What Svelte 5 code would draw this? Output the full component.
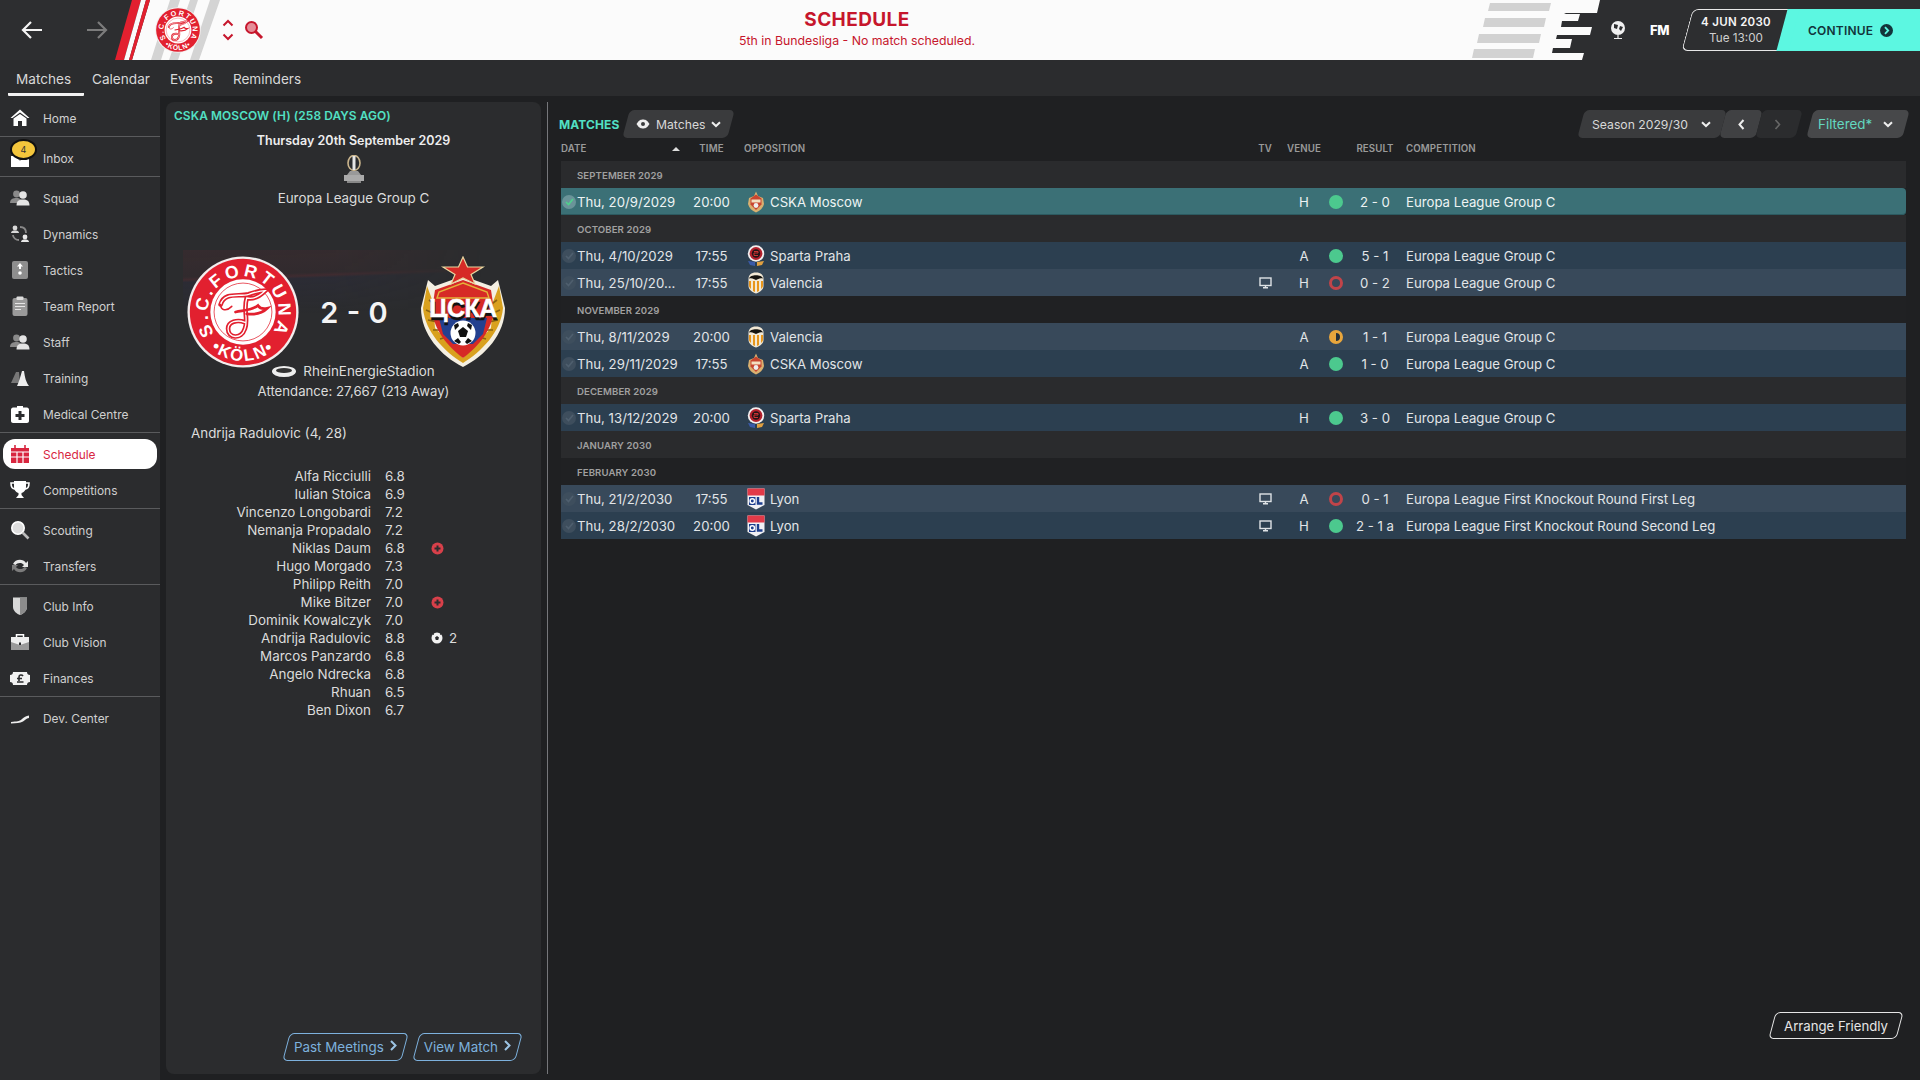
<script>
  const groups = [
    [{ n: 'Home', i: 'home' }],
    [{ n: 'Inbox', i: 'inbox', badge: 4 }],
    [{ n: 'Squad', i: 'people' }, { n: 'Dynamics', i: 'dyn' }, { n: 'Tactics', i: 'tactics' }, { n: 'Team Report', i: 'report' }, { n: 'Staff', i: 'people' }, { n: 'Training', i: 'training' }, { n: 'Medical Centre', i: 'medical' }],
    [{ n: 'Schedule', i: 'cal', active: true }, { n: 'Competitions', i: 'trophy' }],
    [{ n: 'Scouting', i: 'search' }, { n: 'Transfers', i: 'transfer' }],
    [{ n: 'Club Info', i: 'shield' }, { n: 'Club Vision', i: 'case' }, { n: 'Finances', i: 'money' }],
    [{ n: 'Dev. Center', i: 'dev' }]
  ];
  const players = [
    ['Alfa Ricciulli', '6.8'], ['Iulian Stoica', '6.9'], ['Vincenzo Longobardi', '7.2'], ['Nemanja Propadalo', '7.2'],
    ['Niklas Daum', '6.8', 'inj'], ['Hugo Morgado', '7.3'], ['Philipp Reith', '7.0'], ['Mike Bitzer', '7.0', 'inj'],
    ['Dominik Kowalczyk', '7.0'], ['Andrija Radulovic', '8.8', 'goal'], ['Marcos Panzardo', '6.8'], ['Angelo Ndrecka', '6.8'],
    ['Rhuan', '6.5'], ['Ben Dixon', '6.7']
  ];
  const EL = 'Europa League Group C';
  const rows = [
    { h: 'SEPTEMBER 2029' },
    { d: 'Thu, 20/9/2029', t: '20:00', b: 'cska', o: 'CSKA Moscow', v: 'H', r: 'w', s: '2 - 0', c: EL, sel: true },
    { h: 'OCTOBER 2029' },
    { d: 'Thu, 4/10/2029', t: '17:55', b: 'sparta', o: 'Sparta Praha', v: 'A', r: 'w', s: '5 - 1', c: EL },
    { d: 'Thu, 25/10/20...', t: '17:55', b: 'val', o: 'Valencia', tv: true, v: 'H', r: 'l', s: '0 - 2', c: EL },
    { h: 'NOVEMBER 2029' },
    { d: 'Thu, 8/11/2029', t: '20:00', b: 'val', o: 'Valencia', v: 'A', r: 'd', s: '1 - 1', c: EL },
    { d: 'Thu, 29/11/2029', t: '17:55', b: 'cska', o: 'CSKA Moscow', v: 'A', r: 'w', s: '1 - 0', c: EL },
    { h: 'DECEMBER 2029' },
    { d: 'Thu, 13/12/2029', t: '20:00', b: 'sparta', o: 'Sparta Praha', v: 'H', r: 'w', s: '3 - 0', c: EL },
    { h: 'JANUARY 2030' },
    { h: 'FEBRUARY 2030' },
    { d: 'Thu, 21/2/2030', t: '17:55', b: 'lyon', o: 'Lyon', tv: true, v: 'A', r: 'l', s: '0 - 1', c: 'Europa League First Knockout Round First Leg' },
    { d: 'Thu, 28/2/2030', t: '20:00', b: 'lyon', o: 'Lyon', tv: true, v: 'H', r: 'w', s: '2 - 1 a', c: 'Europa League First Knockout Round Second Leg' }
  ];
</script>

{#snippet fortuna(size, cls, id)}
  <svg class={cls} width={size} height={size} viewBox="0 0 120 120">
    <circle cx="60" cy="60" r="59.5" fill="#f3eeee"/>
    <circle cx="60" cy="60" r="57" fill="#e2202f"/>
    <circle cx="60" cy="60" r="35" fill="#fff"/>
    <circle cx="60" cy="60" r="31" fill="none" stroke="#e2202f" stroke-width="0.8"/>
    <defs>
      <path id={id + 't'} d="M33 87 A38 38 0 1 1 87 87"/>
      <path id={id + 'b'} d="M23 97 A52 52 0 0 0 97 97"/>
    </defs>
    <text class="bt"><textPath href={'#' + id + 't'} startOffset="50%" text-anchor="middle">S.C.FORTUNA</textPath></text>
    <text class="bt2"><textPath href={'#' + id + 'b'} startOffset="50%" text-anchor="middle">•KÖLN•</textPath></text>
    <g fill="none" stroke-linecap="round">
      <path d="M36 52 C40 38 56 44 66 41 C72 39 78 37 84 37 C78 43 72 47 64 45 C60 58 66 68 62 78 C58 90 44 88 44 78 C44 70 54 68 62 71" stroke="#e2202f" stroke-width="5"/>
      <path d="M36 52 C40 38 56 44 66 41 C72 39 78 37 84 37 C78 43 72 47 64 45 C60 58 66 68 62 78 C58 90 44 88 44 78 C44 70 54 68 62 71" stroke="#fff" stroke-width="1.4"/>
      <path d="M52 60 C62 58 70 58 76 53 C78 56 82 57 86 56 C80 62 72 63 64 62" stroke="#e2202f" stroke-width="3"/>
      <path d="M36 52 C36 58 42 60 48 54" stroke="#e2202f" stroke-width="1.6"/>
    </g>
  </svg>
{/snippet}

{#snippet cskaBig()}
  <svg class="cska-big" width="84" height="112" viewBox="0 0 84 112">
    <path d="M42 20 L70 30 L77 24 L84 52 C84 78 64 100 42 111 C20 100 0 78 0 52 L7 24 L14 30Z" fill="#f4efe2"/>
    <path d="M6 30 L2 52 C4 76 24 96 42 107 C60 96 80 76 82 52 L78 30 L72 46 L70 72 L42 102 L14 72 L12 46Z" fill="#d9a11e"/>
    <path d="M8 44 L16 50 M5 54 L14 58 M7 64 L16 66 M12 74 L20 74 M19 83 L26 81 M76 44 L68 50 M79 54 L70 58 M77 64 L68 66 M72 74 L64 74 M65 83 L58 81" stroke="#8a6410" stroke-width="1.6"/>
    <path d="M42 24 L70 34 L73 54 C71 74 58 90 42 102 C26 90 13 74 11 54 L14 34Z" fill="#d62a26"/>
    <path d="M42 27 L66 36 L68 42 H16 L18 36Z" fill="none" stroke="#e4b23a" stroke-width="1.4"/>
    <path d="M18 62 L66 62 L62 78 L52 88 L32 88 L22 78Z" fill="#23408f"/>
    <path d="M42 1 L46.5 11 L62 11 L50 18.5 L54 28 L42 22 L30 28 L34 18.5 L22 11 L37.5 11Z" fill="#d62a26" stroke="#e8d7a0" stroke-width="1.2"/>
    <text x="42.5" y="64" class="cska-shadow">ЦСКА</text>
    <text x="42" y="61" class="cska-t">ЦСКА</text>
    <circle cx="42" cy="77" r="12.5" fill="#fff"/>
    <path d="M42 71 l5 4 -2 6 h-6 l-2 -6Z" fill="#111"/>
    <path d="M33 69 l4 -2 1 3 -4 4Z M51 69 l-4 -2 -1 3 4 4Z M33 85 l4 -3 3 4 -2 2Z M51 85 l-4 -3 -3 4 2 2Z" fill="#111"/>
  </svg>
{/snippet}

{#snippet small(b)}
  <svg width="20" height="22" viewBox="0 0 20 22">
    {#if b === 'cska'}
      <path d="M10 0.5 L12 5 L17 7 L18 13 C17 17 14 20 10 21.5 C6 20 3 17 2 13 L3 7 L8 5Z" fill="#d9b070"/>
      <path d="M10 3.5 L15.5 7.5 L15.5 13.5 L10 19 L4.5 13.5 L4.5 7.5Z" fill="#c8452f"/>
      <rect x="5.5" y="8.5" width="9" height="3" fill="#f3dfc0"/>
      <circle cx="10" cy="14.5" r="2.4" fill="#eee"/>
    {:else if b === 'sparta'}
      <circle cx="10" cy="8.5" r="8.2" fill="#f2eeee"/>
      <circle cx="10" cy="8.5" r="6.4" fill="#b3202c"/>
      <circle cx="10" cy="8.5" r="4.2" fill="#241416"/>
      <path d="M8 6.5 H12 V8 H8 V10.5 H12" fill="none" stroke="#c33" stroke-width="1"/>
      <path d="M2 16 L9 17 L9 21 L4 20Z" fill="#3a5aa8"/>
      <path d="M18 16 L11 17 L11 21 L16 20Z" fill="#e0a040"/>
    {:else if b === 'val'}
      <path d="M10 0.5 C15 0.5 17.5 3 17.5 7 L17.5 14 C17.5 17.5 14 20 10 21.5 C6 20 2.5 17.5 2.5 14 L2.5 7 C2.5 3 5 0.5 10 0.5Z" fill="#f2e8d5"/>
      <path d="M3 6.5 C4 2 16 2 17 6.5 C14 5.5 12 7 10 8 C8 7 6 5.5 3 6.5Z" fill="#15130f"/>
      <path d="M3 9 H5 V17 C4 16 3 15 3 14Z M7 9 H9 V20 L7 19Z M11 9 H13 V19 L11 20Z M15 9 H17 V14 C17 15 16 16 15 17Z" fill="#e8961c"/>
    {:else}
      <path d="M1.5 0.5 H18.5 V17 L10 21.5 L1.5 17Z" fill="#f1f1f4"/>
      <rect x="1.5" y="0.5" width="17" height="7" fill="#e23a48"/>
      <rect x="3" y="9" width="6.5" height="8" fill="#1e3f8e"/>
      <circle cx="6.3" cy="13" r="2.2" fill="none" stroke="#fff" stroke-width="1.5"/>
      <path d="M12 9 V15.5 H16.5" fill="none" stroke="#1e3f8e" stroke-width="2.4"/>
    {/if}
  </svg>
{/snippet}

{#snippet icon(i)}
  <svg class="side-icon" width="20" height="20" viewBox="0 0 20 20">
    {#if i === 'home'}
      <path d="M10 1.5 L19.5 10 L17.5 10 L10 4.5 L2.5 10 L0.5 10Z" fill="#fff"/><path d="M3.5 10.5 L10 6 L16.5 10.5 V18 H12 V13 H8 V18 H3.5Z" fill="#fff"/>
    {:else if i === 'inbox'}
      <path d="M1 8 H19 V19 H1Z" fill="#fff"/><path d="M5 8 L10 13 L15 8Z" fill="#888"/>
    {:else if i === 'people'}
      <circle cx="6.5" cy="6" r="3.4" fill="#8a8a8a"/><path d="M0 15 C0 11 3 10 6.5 10 C10 10 12 12 12 15Z" fill="#8a8a8a"/>
      <circle cx="13" cy="7" r="3.8" fill="#e4e4e4"/><path d="M6.5 17.5 C6.5 13 9 11.5 13 11.5 C17 11.5 19.5 13 19.5 17.5Z" fill="#e4e4e4"/>
    {:else if i === 'dyn'}
      <circle cx="5" cy="4" r="2.4" fill="#d8d8d8"/><path d="M1 9 C1 7 3 6.5 5 6.5 C7 6.5 9 7 9 9Z" fill="#d8d8d8"/>
      <circle cx="15" cy="13" r="2.4" fill="#e8e8e8"/><path d="M11 18 C11 16 13 15.5 15 15.5 C17 15.5 19 16 19 18Z" fill="#e8e8e8"/>
      <path d="M10 3 C14 3 16 5 16 9 M9 16 C6 16 3 14 3 11" fill="none" stroke="#888" stroke-width="1.8"/>
    {:else if i === 'tactics'}
      <rect x="2" y="1" width="16" height="18" rx="2" fill="#8e8e8e"/><path d="M10 3 L13 6.5 H11 V9 H9 V6.5 H7Z" fill="#fff"/><circle cx="10" cy="13" r="1.8" fill="#fff"/>
    {:else if i === 'report'}
      <rect x="2.5" y="2" width="15" height="18" rx="2" fill="#9a9a9a"/><rect x="6.5" y="0.5" width="7" height="3.5" rx="1" fill="#ddd"/>
      <path d="M5 7.5 H15 M5 10.5 H15 M5 13.5 H11" stroke="#e6e6e6" stroke-width="1.2"/>
    {:else if i === 'training'}
      <path d="M1 15 L6 4 L9 4 L10 15Z" fill="#777"/><path d="M7 18 C9 14 10 10 12 3 L14 3 C15 10 16 14 19 18Z" fill="#eee"/>
    {:else if i === 'medical'}
      <path d="M7 3.5 V2 H13 V3.5 H17 C18 3.5 19 4.5 19 5.5 V17 C19 18 18 19 17 19 H3 C2 19 1 18 1 17 V5.5 C1 4.5 2 3.5 3 3.5Z" fill="#fff"/>
      <path d="M8.5 7 H11.5 V10 H14.5 V13 H11.5 V16 H8.5 V13 H5.5 V10 H8.5Z" fill="#2b2c2e"/>
    {:else if i === 'cal'}
      <path d="M1 4 H19 V19 H1Z" fill="#d8263f"/><path d="M5 1 V5 M15 1 V5" stroke="#d8263f" stroke-width="1.6"/>
      <path d="M1 8 H19 M1 13 H19 M7 8 V19 M13 8 V19" stroke="#fff" stroke-width="1.2"/>
    {:else if i === 'trophy'}
      <path d="M4 1 H16 V7 C16 11 13 12.5 11.5 13 V15 L14 18 H6 L8.5 15 V13 C7 12.5 4 11 4 7Z" fill="#fff"/>
      <path d="M4 3 H1 C1 7 3 9 5 9 M16 3 H19 C19 7 17 9 15 9" fill="none" stroke="#fff" stroke-width="1.6"/>
    {:else if i === 'search'}
      <circle cx="8" cy="8" r="6.2" fill="#ddd" stroke="#fff" stroke-width="1.6"/><path d="M12.5 12.5 L18.5 18.5" stroke="#bbb" stroke-width="2.6"/>
    {:else if i === 'transfer'}
      <path d="M3 8 C5 3 13 2 16 7 L18 5 V11 H12 L14 9 C12 6 7 6.5 5.5 9Z" fill="#e8e8e8"/>
      <path d="M17 12 C15 17 7 18 4 13 L2 15 V9 H8 L6 11 C8 14 13 13.5 14.5 11Z" fill="#7c7c7c"/>
    {:else if i === 'shield'}
      <path d="M3 1.5 H17 V11 C17 15 13 18 10 19 C7 18 3 15 3 11Z" fill="#d8d8d8"/><path d="M10 1.5 H17 V11 C17 15 13 18 10 19Z" fill="#8c8c8c"/>
    {:else if i === 'case'}
      <path d="M1 5 H19 V18 H1Z" fill="#999"/>
      <path d="M6.5 5 V2.8 H13.5 V5" fill="none" stroke="#fff" stroke-width="1.5"/><path d="M1 5 H19 V10 L10 13 L1 10Z" fill="#eee"/><rect x="9" y="10.5" width="2" height="2.5" fill="#2b2c2e"/>
    {:else if i === 'money'}
      <rect x="0" y="4" width="20" height="13" fill="#f2f2f2"/><path d="M0 7 A3 3 0 0 0 3 4 H0Z M20 7 A3 3 0 0 1 17 4 H20Z M0 14 A3 3 0 0 1 3 17 H0Z M20 14 A3 3 0 0 0 17 17 H20Z" fill="#2b2c2e"/>
      <path d="M13 8 C12 6.5 9 6.5 9 9 V13 M7 10.5 H12 M7 14 H13.5" fill="none" stroke="#2b2c2e" stroke-width="1.6"/>
    {:else if i === 'dev'}
      <path d="M1 14 C7 13 9 14 12 11 C14 9 16 8 19 7.5 L19 10 C16 10.5 15 12 13 13.5 C10 15.5 6 15 1 15.5Z" fill="#eee"/>
    {/if}
  </svg>
{/snippet}

{#snippet chev()}
  <svg width="10" height="7" viewBox="0 0 10 7"><path d="M1 1.2 L5 5 L9 1.2" fill="none" stroke="#eee" stroke-width="2"/></svg>
{/snippet}

<div class="app">
  <header class="top">
    <svg class="top-art" width="1920" height="60" viewBox="0 0 1920 60">
      <path d="M150 0 H1600 L1597 13 H1566 L1564 14 H1580 L1578 21 H1562 L1561 27 H1592 L1590 35 H1557 L1556 39 H1572 L1570 48 H1553 L1552 53 H1584 L1582 60 H132Z" fill="#fbfbfb"/>
      <path d="M132 0 H141 L124 60 H115Z" fill="#e2202f"/>
      <path d="M141 0 H146 L129 60 H124Z" fill="#fbfbfb"/>
      <path d="M146 0 H150 L132 60 H129Z" fill="#e2202f"/>
      <path d="M170 0 H180 L161 60 H151Z M190 0 H198 L178 60 H169Z M210 0 H220 L199 60 H190Z" fill="#d4d4d4"/>
      <path d="M1490 3 H1551 L1549 11 H1488Z M1485 18 H1546 L1544 27 H1483Z M1479 34 H1541 L1539 43 H1477Z M1474 49 H1535 L1533 58 H1472Z" fill="#d2d2d2"/>
    </svg>
    <div class="top-left">
      <svg class="nav" width="24" height="20" viewBox="0 0 24 20"><path d="M22 10 H3 M11 2 L3 10 L11 18" fill="none" stroke="#f4f4f4" stroke-width="2.2"/></svg>
      <svg class="nav fwd" width="24" height="20" viewBox="0 0 24 20"><path d="M2 10 H21 M13 2 L21 10 L13 18" fill="none" stroke="#7c7c7c" stroke-width="2.2"/></svg>
      {@render fortuna(46, 'club-small', 'fs')}
      <svg class="updown" width="12" height="22" viewBox="0 0 12 22"><path d="M1.5 6.5 L6 2 L10.5 6.5 M1.5 15.5 L6 20 L10.5 15.5" fill="none" stroke="#c6162c" stroke-width="2"/></svg>
      <svg class="lens" width="20" height="20" viewBox="0 0 20 20"><circle cx="7.5" cy="7.5" r="5.5" fill="#e58d98" stroke="#c6162c" stroke-width="2"/><path d="M11.5 11.5 L18 18" stroke="#c6162c" stroke-width="3"/></svg>
    </div>
    <div class="title">
      <div class="t1">SCHEDULE</div>
      <div class="t2">5th in Bundesliga - No match scheduled.</div>
    </div>
    <div class="top-right">
      <svg class="globe" width="18" height="20" viewBox="0 0 18 20"><circle cx="9" cy="8" r="7" fill="#f0f0f0"/><path d="M5 4 L9 5 L8 9 L5 8Z M11 6 L14 7 L12 11 L10 9Z" fill="#2d2e30"/><path d="M9 15 V18 M5 18.5 H13" stroke="#eee" stroke-width="1.2"/></svg>
      <span class="fm">FM</span>
      <div class="date"><b>4 JUN 2030</b><span>Tue 13:00</span></div>
      <div class="continue">
        <span>CONTINUE</span>
        <svg width="13" height="13" viewBox="0 0 13 13"><circle cx="6.5" cy="6.5" r="6.5" fill="#12343a"/><path d="M5 3.2 L8.2 6.5 L5 9.8" fill="none" stroke="#5cf7e1" stroke-width="1.8"/></svg>
      </div>
    </div>
  </header>

  <nav class="tabs">
    <span class="tab on">Matches</span><span class="tab">Calendar</span><span class="tab">Events</span><span class="tab">Reminders</span>
  </nav>

  <div class="body">
    <aside class="side">
      {#each groups as g}
        <div class="group">
          {#each g as item}
            <div class="item" class:active={item.active}>
              <span class="ico">{@render icon(item.i)}{#if item.badge}<em class="bubble">{item.badge}</em>{/if}</span>
              <span>{item.n}</span>
            </div>
          {/each}
        </div>
      {/each}
    </aside>

    <section class="panel">
      <h2 class="ph">CSKA MOSCOW (H) (258 DAYS AGO)</h2>
      <div class="mdate">Thursday 20th September 2029</div>
      <svg class="cup" width="22" height="28" viewBox="0 0 22 28">
        <ellipse cx="11" cy="8" rx="6" ry="7.5" fill="none" stroke="#c9b48c" stroke-width="1.6"/>
        <path d="M11 1 V15" stroke="#e6e6e6" stroke-width="3"/>
        <path d="M7 16 H15 L18 20 H4Z" fill="#999"/><rect x="1" y="20" width="20" height="6" fill="#aaa"/><rect x="4" y="26" width="14" height="2" fill="#888"/>
      </svg>
      <div class="comp">Europa League Group C</div>
      <div class="hero">
        {@render fortuna(112, 'club-big', 'fb')}
        <div class="score">2 - 0</div>
        {@render cskaBig()}
      </div>
      <div class="stadium">
        <svg width="24" height="11" viewBox="0 0 24 11"><ellipse cx="12" cy="5.5" rx="12" ry="5.5" fill="#eee"/><ellipse cx="12" cy="4.5" rx="8" ry="2.4" fill="#333"/></svg>
        <span>RheinEnergieStadion</span>
      </div>
      <div class="att">Attendance: 27,667 (213 Away)</div>
      <div class="motm">Andrija Radulovic (4, 28)</div>
      <div class="players">
        {#each players as p}
          <div class="pl">
            <span class="pn">{p[0]}</span>
            <span class="pr">{p[1]}</span>
            <span class="px">
              {#if p[2] === 'inj'}
                <svg width="13" height="13" viewBox="0 0 13 13"><circle cx="6.5" cy="6.5" r="6" fill="#d8404a"/><path d="M6.5 3.5 V9.5 M3.5 6.5 H9.5" stroke="#2b2c2e" stroke-width="2"/></svg>
              {:else if p[2] === 'goal'}
                <svg width="12" height="12" viewBox="0 0 12 12"><circle cx="6" cy="6" r="5.5" fill="#f2f2f2"/><path d="M6 4 L8 5.5 L7.2 8 H4.8 L4 5.5Z M1 2 L3 1 L3 3Z M11 2 L9 1 L9 3Z" fill="#2b2c2e"/></svg>
                <span class="gn">2</span>
              {/if}
            </span>
          </div>
        {/each}
      </div>
      <div class="pbtns">
        <button class="link">Past Meetings <svg width="7" height="11" viewBox="0 0 7 11"><path d="M1 1 L5.5 5.5 L1 10" fill="none" stroke="#9cc4e4" stroke-width="2"/></svg></button>
        <button class="link">View Match <svg width="7" height="11" viewBox="0 0 7 11"><path d="M1 1 L5.5 5.5 L1 10" fill="none" stroke="#9cc4e4" stroke-width="2"/></svg></button>
      </div>
    </section>

    <div class="vline"></div>

    <main class="main">
      <div class="bar">
        <h2 class="mh">MATCHES</h2>
        <div class="sk dd">
          <svg width="14" height="10" viewBox="0 0 14 10"><path d="M0.5 5 C3 1 5 0.5 7 0.5 C9 0.5 11 1 13.5 5 C11 9 9 9.5 7 9.5 C5 9.5 3 9 0.5 5Z" fill="#eee"/><circle cx="7" cy="5" r="2" fill="#3a3b3d"/></svg>
          <span>Matches</span>{@render chev()}
        </div>
        <div class="spacer"></div>
        <div class="sk season"><span>Season 2029/30</span>{@render chev()}</div>
        <div class="sk pager on"><svg width="7" height="11" viewBox="0 0 7 11"><path d="M5.5 1 L1.5 5.5 L5.5 10" fill="none" stroke="#eee" stroke-width="2"/></svg></div>
        <div class="sk pager next"><svg width="7" height="11" viewBox="0 0 7 11"><path d="M1.5 1 L5.5 5.5 L1.5 10" fill="none" stroke="#666" stroke-width="1.6"/></svg></div>
        <div class="sk filt"><span>Filtered*</span>{@render chev()}</div>
      </div>

      <div class="cols grid">
        <span class="c-date">DATE<i class="sort"></i></span>
        <span class="ctr">TIME</span>
        <span class="c-opp">OPPOSITION</span>
        <span class="ctr">TV</span>
        <span class="ctr">VENUE</span>
        <span></span>
        <span class="ctr">RESULT</span>
        <span class="c-comp">COMPETITION</span>
      </div>

      <div class="table">
        {#each rows as r}
          {#if r.h}
            <div class="row head"><span>{r.h}</span></div>
          {:else}
            <div class="row grid match" class:sel={r.sel}>
              <span class="chk" class:ok={r.sel}>
                <svg width="9" height="8" viewBox="0 0 9 8"><path d="M1 4 L3.5 6.5 L8 1" fill="none" stroke={r.sel ? '#4fd08c' : '#4f5f6e'} stroke-width="1.7"/></svg>
              </span>
              <span class="dt">{r.d}</span>
              <span class="ctr">{r.t}</span>
              <span class="bd">{@render small(r.b)}</span>
              <span class="op">{r.o}</span>
              <span class="ctr tv">
                {#if r.tv}<svg width="13" height="12" viewBox="0 0 13 12"><rect x="1" y="1" width="11" height="7.5" fill="none" stroke="#dfe3e6" stroke-width="1.4"/><path d="M4 10.8 H9 M6.5 8.5 V10.8" stroke="#dfe3e6" stroke-width="1.4"/></svg>{/if}
              </span>
              <span class="ctr">{r.v}</span>
              <span class="dot {r.r}"></span>
              <span class="ctr">{r.s}</span>
              <span class="cp">{r.c}</span>
            </div>
          {/if}
        {/each}
      </div>

      <div class="foot"><button class="arr">Arrange Friendly</button></div>
    </main>
  </div>
</div>

<style>
  :global(body) { margin: 0; background: #1f2022; }
  .app { width: 1920px; height: 1080px; display: flex; flex-direction: column; overflow: hidden; font-family: Inter, "Noto Sans", sans-serif; font-size: 13px; color: #dfdfdf; background: #1f2022; }

  .top { height: 60px; background: #2d2e30; position: relative; display: flex; align-items: center; flex: none; }
  .top-art { position: absolute; left: 0; top: 0; }
  .top-left { position: relative; display: flex; align-items: center; width: 300px; }
  .nav { margin-left: 20px; }
  .fwd { margin-left: 41px; }
  .club-small { margin-left: 46px; }
  .updown { margin-left: 21px; }
  .lens { margin-left: 10px; }
  .title { position: absolute; left: 0; right: 206px; top: 9px; text-align: center; color: #c6162c; }
  .t1 { font-size: 19px; font-weight: 700; letter-spacing: .4px; line-height: 22px; }
  .t2 { font-size: 12.3px; line-height: 18px; margin-top: 1px; }
  .top-right { position: absolute; right: 0; top: 9px; height: 42px; display: flex; align-items: center; width: 311px; }
  .fm { margin-left: 23px; font-weight: 800; font-size: 13px; color: #fff; letter-spacing: -.4px; width: 21px; flex: none; }
  .date { position: relative; margin-left: 15px; width: 100px; margin-right: 2px; height: 42px; flex: none; display: flex; flex-direction: column; align-items: center; justify-content: center; line-height: 16px; color: #cfcfcf; font-size: 11.7px; }
  .date b { color: #f5f5f5; font-size: 11.5px; font-weight: 600; letter-spacing: .3px; }
  .date::before { content: ''; position: absolute; inset: 0 -8px 0 1px; border: 1.5px solid #e8e8e8; border-right: 0; border-radius: 6px 0 0 6px; transform: skewX(-15deg); }
  .continue { position: relative; flex: 1; height: 42px; display: flex; align-items: center; gap: 7px; padding-left: 20px; background: #5cf7e1; color: #12343a; font-weight: 600; font-size: 12px; letter-spacing: .2px; }
  .continue::before { content: ''; position: absolute; left: -6px; top: 0; width: 12px; height: 42px; background: #5cf7e1; transform: skewX(-15deg); }
  .continue span, .continue svg { position: relative; }

  .tabs { height: 36px; background: #2b2c2e; display: flex; padding-left: 8px; flex: none; }
  .tab { padding: 0 8px; line-height: 39px; font-size: 13.6px; color: #d8d8d8; height: 33px; margin-right: 4px; }
  .tab.on { border-bottom: 3px solid #f2f2f2; border-radius: 0 0 1px 1px; width: 60px; margin-right: 0; }

  .body { flex: 1; display: flex; min-height: 0; }
  .side { width: 160px; background: #2b2c2e; padding-top: 4px; flex: none; }
  .group { border-bottom: 1px solid #5a5b5d; margin-bottom: 3px; display: flow-root; }
  .group:last-child { border-bottom: 0; }
  .item { height: 36px; display: flex; align-items: center; color: #d0d0d0; font-size: 11.9px; }
  .item .ico { width: 43px; flex: none; position: relative; display: flex; padding-left: 10px; box-sizing: border-box; }
  .item.active { color: #d8263f; background: #fff; border-radius: 12px; height: 30px; margin: 3px; width: 154px; }
  .item.active .ico { width: 40px; padding-left: 7px; }
  .bubble { position: absolute; left: 12px; top: -7px; width: 23px; height: 17px; border-radius: 50%; background: #f4c63c; border: 2px solid #111; color: #333; font-style: normal; font-size: 9px; line-height: 17px; text-align: center; box-sizing: content-box; margin: -2px; }

  .panel { width: 375px; margin: 6px 0 6px 6px; background: #2b2c2e; border-radius: 8px; display: flex; flex-direction: column; align-items: center; flex: none; position: relative; box-sizing: border-box; }
  .ph { align-self: flex-start; margin: 6px 0 0 8px; font-size: 11.9px; font-weight: 600; color: #52e0c4; line-height: 16px; letter-spacing: .1px; }
  .mdate { font-weight: 600; font-size: 12.5px; line-height: 16px; margin-top: 9px; color: #eee; }
  .cup { margin-top: 6px; }
  .comp { font-size: 13.4px; margin-top: 6px; line-height: 18px; color: #dcdcdc; }
  .hero { width: 345px; height: 100px; margin-top: 55px; display: flex; align-items: center; position: relative; }
  .hero::before { content: ''; position: absolute; left: 2px; top: -12px; width: 300px; height: 80px; background: linear-gradient(178deg, rgba(150, 40, 55, .1) 0, rgba(140, 30, 50, .07) 30%, rgba(170, 40, 60, .16) 33%, rgba(50, 45, 95, .14) 36%, rgba(43, 44, 46, 0) 75%); -webkit-mask-image: linear-gradient(90deg, #000 50%, transparent); mask-image: linear-gradient(90deg, #000 50%, transparent); }
  .club-big { margin-left: 6px; flex: none; position: relative; }
  .score { font-size: 29px; font-weight: 600; color: #f4f4f4; width: 112px; margin-left: -1px; text-align: center; word-spacing: 1px; position: relative; }
  .cska-big { margin-left: 11px; flex: none; position: relative; }
  .stadium { display: flex; align-items: center; gap: 7px; font-size: 13.4px; height: 18px; color: #dcdcdc; }
  .att { font-size: 13.2px; line-height: 18px; margin-top: 2px; color: #dcdcdc; }
  .motm { align-self: flex-start; margin: 24px 0 0 25px; font-size: 13.4px; line-height: 18px; color: #dcdcdc; }
  .players { align-self: flex-start; margin-top: 25px; }
  .pl { display: flex; height: 18px; line-height: 18px; font-size: 13.4px; color: #dcdcdc; }
  .pn { width: 205px; text-align: right; }
  .pr { width: 60px; padding-left: 14px; box-sizing: border-box; flex: none; }
  .px { display: flex; align-items: center; gap: 6px; }
  .pbtns { margin-top: auto; align-self: flex-end; display: flex; gap: 11px; margin-right: 22px; margin-bottom: 13px; }
  .link { position: relative; height: 28px; padding: 0 8px; margin: 0; background: none; border: 0; color: #7db1dd; font: inherit; font-size: 13.4px; display: flex; align-items: center; gap: 6px; z-index: 0; white-space: nowrap; }
  .link svg { position: relative; top: -2px; }
  .link::before { content: ''; position: absolute; inset: 0; border: 1.5px solid #7db1dd; border-radius: 5px; transform: skewX(-15deg); }

  .vline { width: 1px; background: #75767a; margin: 6px 0 6px 6px; flex: none; }
  .main { flex: 1; padding: 14px 14px 0 13px; display: flex; flex-direction: column; box-sizing: border-box; min-width: 0; }
  .bar { display: flex; align-items: center; height: 28px; position: relative; left: -2px; width: 1347px; }
  .mh { margin: 0; font-size: 12px; font-weight: 700; color: #52e0c4; letter-spacing: .1px; width: 67px; }
  .sk { position: relative; height: 28px; display: flex; align-items: center; z-index: 0; }
  .sk::before { content: ''; position: absolute; inset: 0; border-radius: 5px; background: #3a3b3d; transform: skewX(-15deg); z-index: -1; }
  .dd { width: 105px; gap: 6px; padding-left: 10px; box-sizing: border-box; color: #d8d8d8; font-size: 12.2px; }
  .spacer { flex: 1; }
  .season { width: 142px; padding-left: 11px; gap: 13px; box-sizing: border-box; font-size: 12.2px; color: #d8d8d8; }
  .pager { width: 36px; justify-content: center; }
  .pager.next { width: 40px; padding-right: 4px; box-sizing: border-box; }
  .pager.on::before { background: #404143; }
  .pager.next::before { background: #2b2c2e; }
  .filt { width: 96px; margin-left: 11px; padding-left: 8px; gap: 11px; box-sizing: border-box; color: #63d9c0; font-size: 13.4px; }
  .filt::before { background: #47484a; }

  .grid { display: grid; grid-template-columns: 16px 113px 43px 35px 482px 30px 48px 16px 62px 500px; align-items: center; }
  .cols { height: 23px; padding-bottom: 2px; box-sizing: border-box; font-size: 9.7px; font-weight: 600; color: #9a9a9a; letter-spacing: .1px; grid-template-columns: 129px 43px 517px 30px 48px 16px 62px 500px; }
  .c-date { display: flex; align-items: center; position: relative; }
  .sort { position: absolute; left: 111px; top: 4px; border: 4px solid transparent; border-top: 0; border-bottom: 4px solid #ddd; }
  .c-opp { padding-left: 11px; }
  .ctr { text-align: center; display: block; }
  .table { display: flex; flex-direction: column; width: 1345px; }
  .row { height: 27px; box-sizing: border-box; font-size: 13.2px; color: #e2e5e8; }
  .row.head { line-height: 30px; font-size: 9.6px; font-weight: 600; color: #a0a0a0; padding-left: 16px; letter-spacing: .1px; }
  .row:nth-child(odd).head { background: #2a2b2d; }
  .row:nth-child(even).head { background: #202123; }
  .row.match:nth-child(even) { background: #2c3f50; }
  .row.match:nth-child(odd) { background: #38495a; }
  .row.match.sel { background: #3b7076; border-radius: 0 4px 4px 0; box-shadow: inset 0 -1px 0 #2c5a60; color: #eef4f4; }
  .chk { width: 14px; height: 14px; border-radius: 50%; background: #3e4e5d; margin-left: 1px; display: flex; align-items: center; justify-content: center; }
  .chk.ok { background: #6a9499; }
  .dt { white-space: nowrap; }
  .bd { display: flex; justify-content: center; padding-left: 11px; box-sizing: border-box; }
  .bd svg { display: block; }
  .op { padding-left: 2px; }
  .tv { display: flex; justify-content: center; align-items: center; }
  .dot { width: 14px; height: 14px; border-radius: 50%; justify-self: center; box-sizing: border-box; position: relative; }
  .dot.w { background: #4cc98e; }
  .dot.l { border: 3px solid #c14449; }
  .dot.d { background: #e9a63c; }
  .dot.d::after { content: ''; position: absolute; left: 7px; top: 3px; width: 4px; height: 8px; border-radius: 0 4px 4px 0; background: #26303a; }
  .foot { margin-top: auto; display: flex; justify-content: flex-end; padding-bottom: 41px; width: 1339px; }
  .arr { position: relative; height: 27px; width: 128px; background: none; border: 0; padding: 0; margin: 0; color: #e6e6e6; font: inherit; font-size: 13.2px; z-index: 0; }
  .arr::before { content: ''; position: absolute; inset: 0; border: 1.5px solid #e6e6e6; border-radius: 5px; transform: skewX(-15deg); }
  .bt { font-family: "Liberation Sans", sans-serif; font-weight: 700; font-size: 19px; fill: #fff; letter-spacing: 3.5px; }
  .bt2 { font-family: "Liberation Sans", sans-serif; font-weight: 700; font-size: 18px; fill: #fff; letter-spacing: 2px; }
  .cska-t, .cska-shadow { font-family: "Liberation Sans", sans-serif; font-weight: 700; font-size: 25px; text-anchor: middle; letter-spacing: -.5px; stroke-width: .5px; }
  .cska-t { fill: #fff; stroke: #fff; }
  .cska-shadow { fill: #111; stroke: #111; }
</style>
